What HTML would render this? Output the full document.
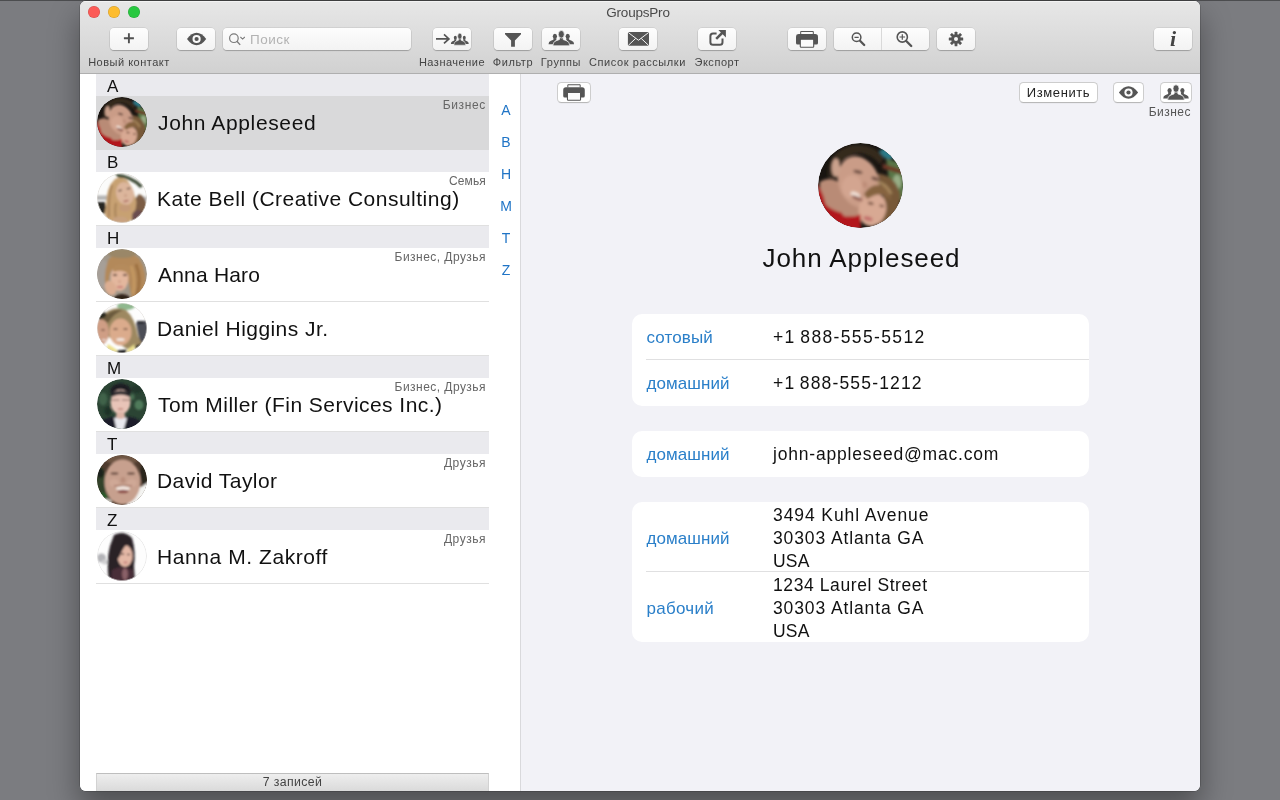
<!DOCTYPE html>
<html lang="ru">
<head>
<meta charset="utf-8">
<title>GroupsPro</title>
<style>
*{box-sizing:border-box;margin:0;padding:0}
html,body{width:1280px;height:800px;overflow:hidden}
body{font-family:"Liberation Sans","DejaVu Sans",sans-serif;background:#7b7c80;position:relative;color:#111}
#win{will-change:transform;position:absolute;left:80px;top:1px;width:1120px;height:790px;border-radius:6px;overflow:hidden;background:#fff;box-shadow:0 0 0 .5px rgba(0,0,0,.3),0 16px 30px 1px rgba(0,0,0,.36)}
body:before{content:"";position:absolute;left:0;top:0;width:1280px;height:1px;background:rgba(0,0,0,.38);z-index:5}
#tb{position:absolute;left:0;top:0;width:1120px;height:73px;background:linear-gradient(#e7e7e7,#d1d1d1);border-bottom:1px solid #afafaf;box-shadow:inset 0 1px 0 #f3f3f3}
.tl{position:absolute;top:5px;width:12px;height:12px;border-radius:50%;box-shadow:inset 0 0 0 .5px rgba(0,0,0,.18)}
#title{position:absolute;left:-2px;width:1120px;top:4px;text-align:center;font-size:13.5px;color:#4a4a4a}
.btn{position:absolute;top:27px;height:22px;width:38px;border-radius:4px;background:linear-gradient(#fdfdfd,#f3f3f3);box-shadow:0 0 0 .5px rgba(0,0,0,.12),0 1px 1px rgba(0,0,0,.22)}
.btn svg{position:absolute;left:0;top:0}
.lbl{position:absolute;top:55px;font-size:11px;color:#444;white-space:nowrap;transform-origin:0 0}
#left{position:absolute;left:0;top:73px;width:440px;height:717px;background:#fff}
#right{position:absolute;left:440px;top:73px;width:680px;height:717px;background:#f2f2f7;box-shadow:inset 1px 0 0 #d9d9dc}
.sec{position:absolute;left:16px;width:393px;height:22px;background:#eaeaee;font-size:17px;line-height:26px;overflow:hidden;padding-left:11px;color:#111}
.row{position:absolute;left:16px;width:393px;height:54px;border-bottom:1px solid #e0e0e0}
.row.sel{background:#d9d9da;border-bottom-color:#d9d9da}
.row .nm{position:absolute;left:61px;top:14px;font-size:21px;line-height:26px;white-space:nowrap;color:#111}
.row .gr{position:absolute;right:3px;top:2px;font-size:12px;color:#666;white-space:nowrap}
.av{position:absolute;left:1px;top:1px;width:50px;height:50px;border-radius:50%;overflow:hidden}
.idx{position:absolute;left:410px;width:32px;text-align:center;font-size:14px;color:#1f74c6}
#foot{position:absolute;left:16px;top:699px;width:393px;height:18px;background:linear-gradient(#eeeeee,#dadada);border:1px solid #d2d2d2;border-top-color:#bebebe;border-bottom:none;text-align:center;font-size:12.3px;line-height:17px;color:#444}
.rb{position:absolute;top:8px;height:21px;border-radius:4.5px;background:#fff;border:1px solid #cdcdcd;border-bottom-color:#b9b9b9;box-shadow:0 .5px 0 rgba(0,0,0,.06)}
.rb svg{margin:-1px}
.card{position:absolute;left:112px;width:457px;background:#fff;border-radius:10px}
.card .k{position:absolute;left:14.5px;font-size:17px;color:#2a7fc9;white-space:nowrap}
.card .v{position:absolute;left:141px;font-size:17.5px;color:#111;white-space:nowrap}
.card .hr{position:absolute;left:14px;right:0;height:1px;background:#e0e0e1}
</style>
</head>
<body>
<svg width="0" height="0" style="position:absolute"><defs>
<filter id="bl" x="-20%" y="-20%" width="140%" height="140%"><feGaussianBlur stdDeviation="3"/></filter>
<filter id="bl2" x="-20%" y="-20%" width="140%" height="140%"><feGaussianBlur stdDeviation="2"/></filter>
<g id="ic-group"><ellipse cx="-6.4" cy="5.8" rx="2.1" ry="2.6"/><path d="M-12.8 13.8Q-12.8 10.9-10.4 10.2L-7.9 9.3L-7.8 7.8H-5L-4.9 9.2Q-7.2 10.4-7.6 13.8Z"/><ellipse cx="6.4" cy="5.8" rx="2.1" ry="2.6"/><path d="M12.8 13.8Q12.8 10.9 10.4 10.2L7.9 9.3L7.8 7.8H5L4.9 9.2Q7.2 10.4 7.6 13.8Z"/><g stroke="#f7f7f7" stroke-width=".7"><path d="M-8.4 15.3Q-8.6 11.2-5 10.2L-1.9 9.1L-1.6 6.5H1.6L1.9 9.1L5 10.2Q8.6 11.2 8.4 15.3Z"/><ellipse cx="0" cy="3.8" rx="3" ry="3.8"/></g></g>
<g id="ic-eye"><path d="M-9.6 0Q-5-6.2 0-6.2Q5-6.2 9.6 0Q5 6.2 0 6.2Q-5 6.2-9.6 0Z"/><circle r="4.1" fill="#fafafa"/><circle r="2.1"/></g>
<g id="ic-print"><path d="M-6.3-4.5V-7.2H6.3V-4.5" fill="#fafafa" stroke="#555" stroke-width="1"/><path d="M-8.2-4.7H8.2Q11-4.7 11-1.9V4.2Q11 5.8 9.4 5.8H-9.4Q-11 5.8-11 4.2V-1.9Q-11-4.7-8.2-4.7Z"/><rect x="-6.7" y="0.6" width="13.4" height="8" rx=".8" fill="#fafafa" stroke="#555" stroke-width="1.1"/></g>
<clipPath id="cc"><circle cx="50" cy="50" r="50"/></clipPath>
<g id="a1" transform="scale(.5)"><g clip-path="url(#cc)"><rect width="100" height="100" fill="#191511"/><g filter="url(#bl2)">
<path d="M80 18L104 26V70L86 62Z" fill="#587646"/><ellipse cx="81" cy="13" rx="9" ry="5" transform="rotate(25 81 13)" fill="#2a7a88"/><path d="M76 24L100 32V37L76 30Z" fill="#6e3826"/><ellipse cx="93" cy="46" rx="5" ry="9" fill="#98ae86"/>
<path d="M12 40Q10 12 38 3Q64 -1 78 17L73 25Q64 14 50 12Q34 13 26 24L24 42Z" fill="#35291f"/>
<path d="M2 46Q14 38 28 48L44 86L16 84Q2 70 2 46Z" fill="#b98b76"/>
<path d="M-6 44Q4 50 9 72Q20 84 50 84L50 106L-6 106Z" fill="#b0161c"/>
<path d="M70 36Q92 38 97 62Q96 86 80 100L70 96Q84 70 70 36Z" fill="#775839"/>
<ellipse cx="42" cy="78" rx="15" ry="12" fill="#b98b76"/>
<ellipse cx="48" cy="46" rx="24" ry="31" transform="rotate(-20 48 46)" fill="#ca9c87"/>
<ellipse cx="40" cy="52" rx="12" ry="14" fill="#d3a590"/>
<ellipse cx="21" cy="29" rx="5" ry="11" fill="#caa18c"/>
<ellipse cx="64" cy="78" rx="16" ry="20" transform="rotate(15 64 78)" fill="#d8a993"/>
<path d="M54 60Q64 44 82 52L86 68Q74 54 58 66Z" fill="#86643f"/><path d="M70 46Q80 48 86 60" stroke="#a98a5e" stroke-width="3" fill="none"/>
<ellipse cx="44" cy="61" rx="6" ry="3" transform="rotate(24 44 61)" fill="#f2e2d8"/><ellipse cx="46" cy="65" rx="7" ry="2" transform="rotate(24 46 65)" fill="#8e5a50"/>
<ellipse cx="47" cy="34" rx="5.5" ry="2" transform="rotate(14 47 34)" fill="#6a4c40"/><ellipse cx="67" cy="42" rx="4.5" ry="2" transform="rotate(20 67 42)" fill="#6a4c40"/>
<ellipse cx="55" cy="49" rx="3" ry="4" transform="rotate(-20 55 49)" fill="#bd8c78"/>
<ellipse cx="62" cy="71" rx="3.5" ry="1.6" transform="rotate(12 62 71)" fill="#74503f"/><ellipse cx="75" cy="74" rx="3" ry="1.5" transform="rotate(14 75 74)" fill="#74503f"/>
<ellipse cx="59" cy="89" rx="5.5" ry="2.6" transform="rotate(14 59 89)" fill="#c2706c"/>
<path d="M18 82Q34 90 50 84L50 106L18 106Z" fill="#b3171e"/>
</g></g></g>
<g id="a2" transform="scale(.5)"><g clip-path="url(#cc)"><rect width="100" height="100" fill="#fbfbfa"/><g filter="url(#bl2)">
<path d="M36 1Q72 4 92 26L86 30Q68 10 42 9Z" fill="#38452f"/>
<rect x="-5" y="45" width="28" height="9" fill="#b4b4b4"/><rect x="78" y="47" width="30" height="8" fill="#c9c9c9"/>
<path d="M-2 58L16 58L20 82L6 80Z" fill="#262624"/>
<path d="M84 42Q104 50 98 80L72 102L62 70Z" fill="#7b5d45"/>
<path d="M36 12Q18 28 18 66Q12 86 22 97L62 102Q78 84 79 58Q72 28 60 14Q46 6 36 12Z" fill="#c7a172"/>
<path d="M30 24Q22 50 24 88M38 60Q34 80 40 98" stroke="#a8835a" stroke-width="4" fill="none"/>
<ellipse cx="56" cy="41" rx="18" ry="23" transform="rotate(-12 56 41)" fill="#dcb69c"/>
<ellipse cx="56" cy="70" rx="12" ry="7" fill="#c49a78"/>
<ellipse cx="46" cy="35" rx="4" ry="1.6" transform="rotate(-10 46 35)" fill="#6a5044"/><ellipse cx="63" cy="31" rx="4" ry="1.6" transform="rotate(-10 63 31)" fill="#6a5044"/>
<ellipse cx="58" cy="56" rx="6" ry="1.8" transform="rotate(-12 58 56)" fill="#b4766a"/><ellipse cx="57" cy="45" rx="2.5" ry="3" fill="#c99c84"/>
<ellipse cx="82" cy="86" rx="12" ry="12" fill="#6b4d50"/>
<ellipse cx="46" cy="94" rx="16" ry="7" fill="#c8a280"/>
</g><circle cx="50" cy="50" r="49.2" fill="none" stroke="#d9d4cf" stroke-width="1.4"/></g></g>
<g id="a3" transform="scale(.5)"><g clip-path="url(#cc)"><rect width="100" height="100" fill="#a0978a"/><g filter="url(#bl2)">
<ellipse cx="10" cy="50" rx="14" ry="30" fill="#a69f98"/>
<path d="M24 20Q50 -6 84 18Q104 50 94 84L70 102L62 60Q52 30 32 40Q22 50 24 70L16 70Q14 40 24 20Z" fill="#b3895a"/>
<ellipse cx="50" cy="9" rx="28" ry="9" fill="#9a8768"/>
<path d="M78 30Q90 60 80 92" stroke="#9c7040" stroke-width="6" fill="none"/><path d="M68 34Q78 60 72 90" stroke="#c69a62" stroke-width="5" fill="none"/>
<ellipse cx="45" cy="58" rx="18" ry="26" fill="#e3b79e"/>
<ellipse cx="27" cy="78" rx="11" ry="15" transform="rotate(-25 27 78)" fill="#dcae92"/>
<path d="M34 96Q50 84 66 96L64 104L36 104Z" fill="#2e2019"/>
<path d="M30 38Q48 22 68 38L66 58Q58 38 34 46Z" fill="#b58b5c"/>
<ellipse cx="36" cy="52" rx="4.5" ry="1.8" fill="#5e4438"/><ellipse cx="56" cy="52" rx="4.5" ry="1.8" fill="#5e4438"/>
<ellipse cx="46" cy="76" rx="6.5" ry="2.6" fill="#cc857c"/><ellipse cx="45" cy="65" rx="2.5" ry="3" fill="#d3a088"/>
</g></g></g>
<g id="a4" transform="scale(.5)"><g clip-path="url(#cc)"><rect width="100" height="100" fill="#fdfdfd"/><g filter="url(#bl2)">
<ellipse cx="58" cy="6" rx="18" ry="8" fill="#8fb88e"/>
<path d="M78 40L104 34V76L86 80Z" fill="#4c4d57"/><rect x="80" y="36" width="14" height="6" fill="#2c2c30"/>
<path d="M6 32Q28 2 58 14Q76 30 82 66L92 86L60 92L12 60Z" fill="#9d8860"/>
<path d="M10 34Q26 10 52 14Q34 20 22 40Z" fill="#6a5a3c"/>
<ellipse cx="10" cy="26" rx="10" ry="5" transform="rotate(-35 10 26)" fill="#25251f"/>
<ellipse cx="9" cy="58" rx="15" ry="25" fill="#cf9e85"/>
<ellipse cx="47" cy="58" rx="22" ry="27" fill="#dbab8c"/>
<path d="M22 82L40 94L36 106L14 106Z" fill="#ece08c"/><path d="M62 92L76 82L72 106L58 106Z" fill="#ece08c"/>
<path d="M40 95L60 93L56 106L38 106Z" fill="#1e1e1c"/><path d="M76 86L92 80L80 102Z" fill="#2a2a28"/>
<ellipse cx="47" cy="73" rx="8.5" ry="3" fill="#f2e6de"/>
<ellipse cx="37" cy="52" rx="4.5" ry="1.7" fill="#6b4c3c"/><ellipse cx="57" cy="52" rx="4.5" ry="1.7" fill="#6b4c3c"/>
<ellipse cx="12" cy="54" rx="4" ry="1.6" fill="#6b4c3c"/><ellipse cx="14" cy="74" rx="5" ry="2" fill="#e8d4cc"/>
</g><circle cx="50" cy="50" r="49.2" fill="none" stroke="#d9d4cf" stroke-width="1.2"/></g></g>
<g id="a5" transform="scale(.5)"><g clip-path="url(#cc)"><rect width="100" height="100" fill="#2b4434"/><g filter="url(#bl2)">
<ellipse cx="84" cy="52" rx="9" ry="10" fill="#4f7a5a"/><ellipse cx="12" cy="40" rx="9" ry="13" fill="#3f624a"/><ellipse cx="80" cy="20" rx="12" ry="8" fill="#22362a"/><ellipse cx="22" cy="64" rx="7" ry="9" fill="#1f3226"/><ellipse cx="70" cy="36" rx="5" ry="6" fill="#4a7052"/>
<ellipse cx="47" cy="24" rx="21" ry="15" fill="#1f1f24"/>
<ellipse cx="47" cy="46" rx="20" ry="25" fill="#e8c4b8"/>
<path d="M-4 106L4 86Q20 76 36 75L62 75Q82 78 96 90L104 106Z" fill="#1b1f2b"/>
<path d="M34 78Q48 72 60 78L52 106L40 106Z" fill="#e9e9ef"/>
<ellipse cx="47" cy="73" rx="9" ry="7" fill="#dcb4a6"/>
<path d="M28 30Q47 16 67 30L66 36Q47 26 29 36Z" fill="#26262c"/>
<path d="M29 42H45M50 42H66" stroke="#8a6c64" stroke-width="2.4"/><ellipse cx="47" cy="60" rx="6" ry="2" fill="#c48c80"/>
</g></g></g>
<g id="a6" transform="scale(.5)"><g clip-path="url(#cc)"><rect width="100" height="100" fill="#4e3b2e"/><g filter="url(#bl2)">
<ellipse cx="6" cy="58" rx="13" ry="34" fill="#33422b"/><ellipse cx="13" cy="84" rx="9" ry="9" fill="#2b5a2b"/><ellipse cx="6" cy="36" rx="8" ry="10" fill="#1f241a"/>
<ellipse cx="95" cy="38" rx="9" ry="22" fill="#29261f"/>
<path d="M76 70L104 54V106H56Z" fill="#f4f4f2"/>
<ellipse cx="50" cy="9" rx="34" ry="10" fill="#6e5443"/>
<ellipse cx="51" cy="54" rx="36" ry="45" fill="#c7a08e"/>
<ellipse cx="34" cy="56" rx="10" ry="8" fill="#cfa896"/><ellipse cx="70" cy="56" rx="10" ry="8" fill="#cfa896"/>
<ellipse cx="52" cy="67" rx="14" ry="5" fill="#f1e4dc"/><ellipse cx="52" cy="73" rx="11" ry="3.5" fill="#8c4c46"/><path d="M34 62Q52 60 70 62" stroke="#9a6a5c" stroke-width="2.2" fill="none"/>
<ellipse cx="35" cy="37" rx="8" ry="2.6" fill="#6f5246"/><ellipse cx="68" cy="37" rx="8" ry="2.6" fill="#6f5246"/>
<ellipse cx="52" cy="50" rx="5" ry="6" fill="#b98e7c"/>
<ellipse cx="20" cy="93" rx="10" ry="6" fill="#c4c4bc"/>
</g></g></g>
<g id="a7" transform="scale(.5)"><g clip-path="url(#cc)"><rect width="100" height="100" fill="#fdfdfd"/><g filter="url(#bl2)">
<ellipse cx="9" cy="54" rx="9" ry="9" fill="#b4b4b8"/><ellipse cx="16" cy="62" rx="7" ry="5" fill="#d0d0d2"/>
<path d="M34 8Q54 -2 70 14Q78 40 74 70L76 102L24 102Q18 60 26 30Z" fill="#2a2228"/>
<ellipse cx="56" cy="50" rx="15" ry="22" fill="#e4b8a6"/>
<path d="M32 20Q50 8 68 22Q56 26 48 44Q42 62 36 52Z" fill="#2a2228"/>
<path d="M30 78Q50 66 72 78V106H28Z" fill="#4a2e37"/>
<ellipse cx="56" cy="86" rx="6" ry="12" fill="#8a6068"/>
<ellipse cx="51" cy="46" rx="3.6" ry="1.5" fill="#4a3434"/><ellipse cx="63" cy="47" rx="3.4" ry="1.5" fill="#4a3434"/><ellipse cx="57" cy="63" rx="4.5" ry="1.8" fill="#c47c78"/>
</g><circle cx="50" cy="50" r="49.2" fill="none" stroke="#dcdcdc" stroke-width="1.4"/></g></g>
</defs></svg>
<div id="win">
 <div id="tb">
  <div class="tl" style="left:8px;background:#fc5b57"></div>
  <div class="tl" style="left:28px;background:#fdbc2e"></div>
  <div class="tl" style="left:48px;background:#28c840"></div>
  <div id="title"><span id="tt" style="letter-spacing:-0.20px">GroupsPro</span></div>
  <div class="btn" style="left:30px;width:38px"><svg width="38" height="22" viewBox="0 0 38 22"><path d="M18.9 5.2V15.2M13.9 10.2H23.9" stroke="#505050" stroke-width="1.9" fill="none"/></svg></div>
  <div class="btn" style="left:97px;width:38px"><svg width="38" height="22" viewBox="0 0 38 22"><use href="#ic-eye" x="19.6" y="11" fill="#555"/></svg></div>
  <div class="btn" style="left:143px;width:188px"><svg width="188" height="22" viewBox="0 0 188 22"><circle cx="10.9" cy="10.2" r="4.3" fill="none" stroke="#7a7a7a" stroke-width="1.2"/><path d="M13.9 13.3L17.2 16.9" stroke="#7a7a7a" stroke-width="1.4"/><path d="M17.4 9l2.2 2.1 2.2-2.1" fill="none" stroke="#7a7a7a" stroke-width="1.1"/></svg><span style="position:absolute;left:27px;top:4px;font-size:13.5px;color:#b3b3b3;letter-spacing:.5px" id="ph">Поиск</span></div>
  <div class="btn" style="left:353px;width:38px"><svg width="38" height="22" viewBox="0 0 38 22"><path d="M3 10.9H15.4M11 6.4L15.9 10.9L11 15.4" stroke="#555" stroke-width="1.7" fill="none"/><use href="#ic-group" transform="translate(26.8,5.2) scale(.7,.78)" fill="#555"/></svg></div>
  <div class="btn" style="left:414px;width:38px"><svg width="38" height="22" viewBox="0 0 38 22"><path d="M11 5H27V6.3L20.9 12.6V18.8H17.1V12.6L11 6.3Z" fill="#555"/></svg></div>
  <div class="btn" style="left:462px;width:38px"><svg width="38" height="22" viewBox="0 0 38 22"><use href="#ic-group" x="19.3" y="2.5" fill="#555"/></svg></div>
  <div class="btn" style="left:539px;width:38px"><svg width="38" height="22" viewBox="0 0 38 22"><rect x="8.9" y="4" width="21.1" height="13.8" rx="1.4" fill="#555"/><path d="M9.4 4.6L19.45 12.3L29.5 4.6M9.4 17.3L16.7 10.4M29.5 17.3L22.2 10.4" stroke="#f4f4f4" stroke-width="1" fill="none"/></svg></div>
  <div class="btn" style="left:618px;width:38px"><svg width="38" height="22" viewBox="0 0 38 22"><path d="M18.6 5.6H15Q12.4 5.6 12.4 8.2V14.2Q12.4 16.8 15 16.8H21.9Q24.5 16.8 24.5 14.2V10.6" stroke="#555" stroke-width="2" fill="none"/><path d="M18.2 10.9L25.6 3.5" stroke="#555" stroke-width="2.5" fill="none"/><path d="M20.4 2H27.9V9.5Z" fill="#555"/></svg></div>
  <div class="btn" style="left:708px;width:38px"><svg width="38" height="22" viewBox="0 0 38 22"><use href="#ic-print" x="19" y="10.7" fill="#555"/></svg></div>
  <div class="btn" style="left:754px;width:95px"><svg width="95" height="22" viewBox="0 0 95 22"><path d="M47.5 0V22" stroke="#d9d9d9" stroke-width="1"/><circle cx="22.6" cy="9.3" r="4.3" fill="none" stroke="#555" stroke-width="1.5"/><path d="M26 12.8L30.2 17" stroke="#555" stroke-width="2.3" stroke-linecap="round"/><path d="M20.5 9.3h4.2" stroke="#555" stroke-width="1.2"/><circle cx="68.3" cy="9" r="5.1" fill="none" stroke="#555" stroke-width="1.6"/><path d="M72.2 13L77.2 18" stroke="#555" stroke-width="2.4" stroke-linecap="round"/><path d="M65.5 9h5.6M68.3 6.2v5.6" stroke="#555" stroke-width="1.2"/></svg></div>
  <div class="btn" style="left:857px;width:38px"><svg width="38" height="22" viewBox="0 0 38 22"><g transform="translate(19,11)" fill="#555"><rect x="-1.4" y="-7.2" width="2.8" height="14.4" rx=".5" transform="rotate(0)"/><rect x="-1.4" y="-7.2" width="2.8" height="14.4" rx=".5" transform="rotate(45)"/><rect x="-1.4" y="-7.2" width="2.8" height="14.4" rx=".5" transform="rotate(90)"/><rect x="-1.4" y="-7.2" width="2.8" height="14.4" rx=".5" transform="rotate(135)"/><circle r="4.8"/><circle r="2" fill="#f8f8f8"/></g></svg></div>
  <div class="btn" style="left:1074px;width:38px"><svg width="38" height="22" viewBox="0 0 38 22"><text x="19" y="18.4" text-anchor="middle" font-family="Liberation Serif,serif" font-style="italic" font-weight="bold" font-size="22" fill="#444">i</text></svg></div>
  <div class="lbl" style="left:-11px;width:120px;text-align:center"><span id="l0" style="letter-spacing:0.50px">Новый контакт</span></div>
  <div class="lbl" style="left:312px;width:120px;text-align:center"><span id="l1" style="letter-spacing:0.51px">Назначение</span></div>
  <div class="lbl" style="left:373px;width:120px;text-align:center"><span id="l2" style="letter-spacing:0.56px">Фильтр</span></div>
  <div class="lbl" style="left:421px;width:120px;text-align:center"><span id="l3" style="letter-spacing:0.60px">Группы</span></div>
  <div class="lbl" style="left:497.5px;width:120px;text-align:center"><span id="l4" style="letter-spacing:0.59px">Список рассылки</span></div>
  <div class="lbl" style="left:577px;width:120px;text-align:center"><span id="l5" style="letter-spacing:0.53px">Экспорт</span></div>
 </div>
 <div id="left">
  <div class="sec" style="top:0px"><span id="s0">A</span></div>
  <div class="row sel" style="top:22px"><div class="av"><svg width="50" height="50" viewBox="0 0 50 50"><use href="#a1"/></svg></div><div class="nm" id="n0" style="left:62px;letter-spacing:0.63px">John Appleseed</div><div class="gr" id="g0" style="letter-spacing:0.64px">Бизнес</div></div>
  <div class="sec" style="top:76px"><span id="s1">B</span></div>
  <div class="row" style="top:98px"><div class="av"><svg width="50" height="50" viewBox="0 0 50 50"><use href="#a2"/></svg></div><div class="nm" id="n1" style="letter-spacing:0.50px">Kate Bell (Creative Consulting)</div><div class="gr" id="g1" style="letter-spacing:0.15px">Семья</div></div>
  <div class="sec" style="top:152px"><span id="s2">H</span></div>
  <div class="row" style="top:174px"><div class="av"><svg width="50" height="50" viewBox="0 0 50 50"><use href="#a3"/></svg></div><div class="nm" id="n2" style="left:62px;letter-spacing:0.20px">Anna Haro</div><div class="gr" id="g2" style="letter-spacing:0.46px">Бизнес, Друзья</div></div>
  <div class="row" style="top:228px"><div class="av"><svg width="50" height="50" viewBox="0 0 50 50"><use href="#a4"/></svg></div><div class="nm" id="n3" style="letter-spacing:0.45px">Daniel Higgins Jr.</div></div>
  <div class="sec" style="top:282px"><span id="s3">M</span></div>
  <div class="row" style="top:304px"><div class="av"><svg width="50" height="50" viewBox="0 0 50 50"><use href="#a5"/></svg></div><div class="nm" id="n4" style="left:62px;letter-spacing:0.46px">Tom Miller (Fin Services Inc.)</div><div class="gr" id="g3" style="letter-spacing:0.46px">Бизнес, Друзья</div></div>
  <div class="sec" style="top:358px"><span id="s4">T</span></div>
  <div class="row" style="top:380px"><div class="av"><svg width="50" height="50" viewBox="0 0 50 50"><use href="#a6"/></svg></div><div class="nm" id="n5" style="letter-spacing:0.45px">David Taylor</div><div class="gr" id="g4" style="letter-spacing:0.52px">Друзья</div></div>
  <div class="sec" style="top:434px"><span id="s5">Z</span></div>
  <div class="row" style="top:456px"><div class="av"><svg width="50" height="50" viewBox="0 0 50 50"><use href="#a7"/></svg></div><div class="nm" id="n6" style="letter-spacing:0.57px">Hanna M. Zakroff</div><div class="gr" id="g5" style="letter-spacing:0.52px">Друзья</div></div>
  <div class="idx" style="top:28px"><span id="i0">A</span></div>
  <div class="idx" style="top:60px"><span id="i1">B</span></div>
  <div class="idx" style="top:92px"><span id="i2">H</span></div>
  <div class="idx" style="top:124px"><span id="i3">M</span></div>
  <div class="idx" style="top:156px"><span id="i4">T</span></div>
  <div class="idx" style="top:188px"><span id="i5">Z</span></div>
  <div id="foot"><span id="ft" style="letter-spacing:0.38px">7 записей</span></div>
 </div>
 <div id="right">
  <div class="rb" style="left:37px;width:34px"><svg width="34" height="20" viewBox="0 0 34 20" style="position:absolute;left:0;top:0"><use href="#ic-print" transform="translate(17,9.8) scale(.98)" fill="#555"/></svg></div>
  <div class="rb" style="left:499px;width:79px;text-align:center;font-size:13px;line-height:19px;color:#222"><span id="edit" style="letter-spacing:0.60px">Изменить</span></div>
  <div class="rb" style="left:593px;width:31px"><svg width="31" height="20" viewBox="0 0 31 20" style="position:absolute;left:0;top:0"><use href="#ic-eye" x="15.5" y="10.5" fill="#555"/></svg></div>
  <div class="rb" style="left:640px;width:32px"><svg width="32" height="20" viewBox="0 0 32 20" style="position:absolute;left:0;top:0"><use href="#ic-group" x="16" y="2.8" fill="#555"/></svg></div>
  <div style="position:absolute;right:9px;top:31px;font-size:12px;color:#555;text-align:right;white-space:nowrap"><span id="bizlbl" style="letter-spacing:0.48px">Бизнес</span></div>
  <div style="position:absolute;left:297.5px;top:69px;width:85px;height:85px;border-radius:50%;overflow:hidden"><svg width="85" height="85" viewBox="0 0 50 50"><use href="#a1"/></svg></div>
  <div style="position:absolute;left:141.5px;width:400px;top:168px;text-align:center;font-size:26px;line-height:32px;letter-spacing:.5px;color:#111"><span id="bigname" style="letter-spacing:0.92px">John Appleseed</span></div>
  <div class="card" style="top:240px;height:92px"><div class="k" style="top:14px"><span id="k0" style="letter-spacing:0.13px">сотовый</span></div><div class="v" style="top:13px"><span id="v0" style="letter-spacing:1.35px;word-spacing:-1.5px;">+1 888-555-5512</span></div><div class="hr" style="top:45px"></div><div class="k" style="top:60px"><span id="k1" style="letter-spacing:0.06px">домашний</span></div><div class="v" style="top:59px"><span id="v1" style="letter-spacing:1.16px;word-spacing:-1.5px;">+1 888-555-1212</span></div></div>
  <div class="card" style="top:357px;height:46px"><div class="k" style="top:14px"><span id="k2" style="letter-spacing:0.06px">домашний</span></div><div class="v" style="top:13px"><span id="v2" style="letter-spacing:0.81px;">john-appleseed@mac.com</span></div></div>
  <div class="card" style="top:428px;height:140px"><div class="k" style="top:27px"><span id="k3" style="letter-spacing:0.06px">домашний</span></div><div class="v" style="top:3px"><span id="v3" style="letter-spacing:0.91px;">3494 Kuhl Avenue</span></div><div class="v" style="top:26px"><span id="v4" style="letter-spacing:0.89px;">30303 Atlanta GA</span></div><div class="v" style="top:49px"><span id="v5" style="letter-spacing:0.20px;">USA</span></div><div class="hr" style="top:69px"></div><div class="k" style="top:97px"><span id="k4" style="letter-spacing:0.27px">рабочий</span></div><div class="v" style="top:73px"><span id="v6" style="letter-spacing:0.59px;">1234 Laurel Street</span></div><div class="v" style="top:96px"><span id="v7" style="letter-spacing:0.89px;">30303 Atlanta GA</span></div><div class="v" style="top:119px"><span id="v8" style="letter-spacing:0.20px;">USA</span></div></div>
 </div>
</div>
</body>
</html>
